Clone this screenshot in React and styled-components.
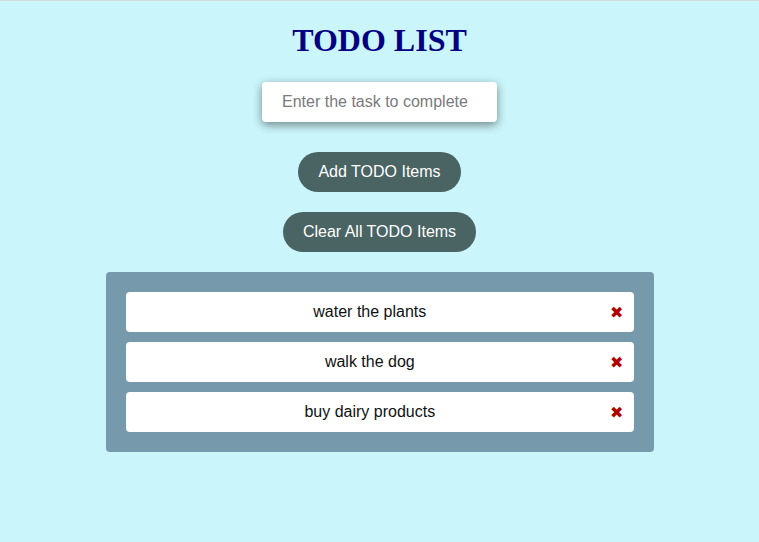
import React, { useState } from 'react';
import styled, { createGlobalStyle } from 'styled-components';

const GlobalStyle = createGlobalStyle`
  html, body {
    margin: 0;
    padding: 0;
  }
  body {
    background-color: #caf5fa;
    border-top: 1px solid #d6dcdd;
    font-family: "Liberation Sans", Arial, sans-serif;
    min-height: 541px;
  }
`;

const App = () => {
  const [task, setTask] = useState('');
  const [todos, setTodos] = useState([
    'water the plants',
    'walk the dog',
    'buy dairy products',
  ]);

  const addTodo = () => {
    if (!task.trim()) return;
    setTodos([...todos, task.trim()]);
    setTask('');
  };

  const removeTodo = (index) => {
    setTodos(todos.filter((_, i) => i !== index));
  };

  return (
    <>
      <GlobalStyle />
      <Container>
        <Title>TODO LIST</Title>
        <TaskInput
          type="text"
          placeholder="Enter the task to complete"
          value={task}
          onChange={(e) => setTask(e.target.value)}
        />
        <ActionButton $top={30} onClick={addTodo}>Add TODO Items</ActionButton>
        <ActionButton $top={20} onClick={() => setTodos([])}>Clear All TODO Items</ActionButton>
        {todos.length > 0 && (
          <ListPanel>
            {todos.map((todo, i) => (
              <TodoRow key={i}>
                <TodoText>{todo}</TodoText>
                <RemoveButton onClick={() => removeTodo(i)}>✖</RemoveButton>
              </TodoRow>
            ))}
          </ListPanel>
        )}
      </Container>
    </>
  );
};

// Styled Components

const Container = styled.div`
  display: flex;
  flex-direction: column;
  align-items: center;
  padding-top: 21px;
`;

const Title = styled.h1`
  margin: 0;
  font-family: "Liberation Serif", "Times New Roman", serif;
  font-size: 32px;
  line-height: 37px;
  font-weight: bold;
  color: #000080;
`;

const TaskInput = styled.input`
  margin-top: 23px;
  width: 235px;
  height: 40px;
  box-sizing: border-box;
  padding: 0 20px;
  border: none;
  border-radius: 4px;
  background: #fff;
  font-family: "Liberation Sans", Arial, sans-serif;
  font-size: 16px;
  color: #333;
  box-shadow: 0 3px 10px rgba(0, 0, 0, 0.45);
  outline: none;

  &::placeholder {
    color: #7a7a7a;
  }
`;

const ActionButton = styled.button`
  margin-top: ${(p) => p.$top}px;
  height: 40px;
  padding: 0 20px;
  border: none;
  border-radius: 20px;
  background-color: #4a6363;
  color: #fff;
  font-family: "Liberation Sans", Arial, sans-serif;
  font-size: 16px;
  cursor: pointer;
`;

const ListPanel = styled.div`
  margin-top: 20px;
  width: 548px;
  box-sizing: border-box;
  padding: 20px;
  display: flex;
  flex-direction: column;
  gap: 10px;
  background-color: #7699ab;
  border-radius: 4px;
`;

const TodoRow = styled.div`
  display: flex;
  align-items: center;
  height: 40px;
  padding-right: 10px;
  background: #fff;
  border-radius: 4px;
`;

const TodoText = styled.span`
  flex: 1;
  padding-left: 4px;
  text-align: center;
  font-size: 16px;
  color: #111;
`;

const RemoveButton = styled.span`
  font-family: "DejaVu Sans", sans-serif;
  font-size: 16px;
  color: #b00000;
  cursor: pointer;
`;

export default App;
